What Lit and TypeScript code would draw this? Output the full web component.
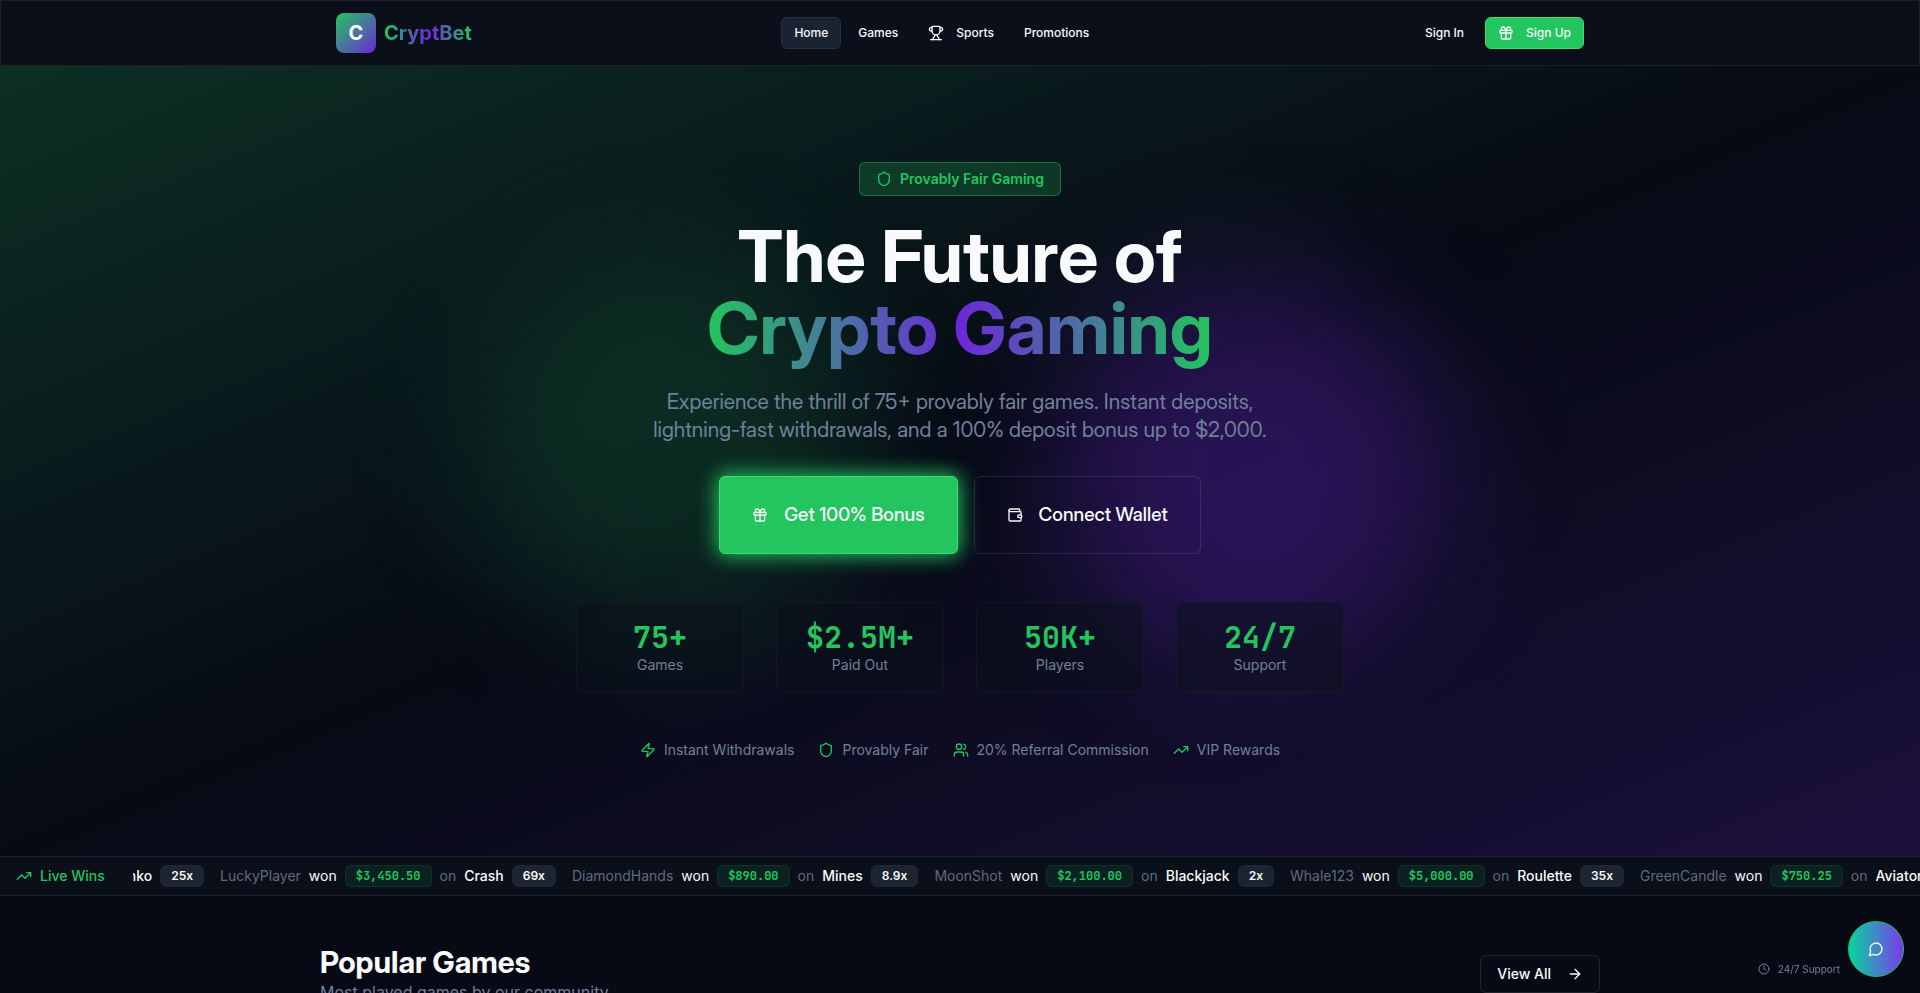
import { LitElement, html, css, svg } from "lit";
import { customElement, property } from "lit/decorators.js";

const icons = {
  trophy: svg`<path d="M10 14.66v1.626a2 2 0 0 1-.976 1.696A5 5 0 0 0 7 21.978"/><path d="M14 14.66v1.626a2 2 0 0 0 .976 1.696A5 5 0 0 1 17 21.978"/><path d="M18 9h1.5a1 1 0 0 0 0-5H18"/><path d="M4 22h16"/><path d="M6 9a6 6 0 0 0 12 0V3a1 1 0 0 0-1-1H7a1 1 0 0 0-1 1z"/><path d="M6 9H4.500a1 1 0 0 1 0-5H6"/>`,
  gift: svg`<rect x="3" y="8" width="18" height="4" rx="1"/><path d="M12 8v13"/><path d="M19 12v7a2 2 0 0 1-2 2H7a2 2 0 0 1-2-2v-7"/><path d="M7.5 8a2.500 2.500 0 0 1 0-5A4.800 8 0 0 1 12 8a4.800 8 0 0 1 4.500-5 2.500 2.500 0 0 1 0 5"/>`,
  shield: svg`<path d="M20 13c0 5-3.500 7.500-7.660 8.950a1 1 0 0 1-.67-.01C7.500 20.500 4 18 4 13V6a1 1 0 0 1 1-1c2 0 4.500-1.200 6.240-2.720a1.170 1.170 0 0 1 1.520 0C14.510 3.810 17 5 19 5a1 1 0 0 1 1 1z"/>`,
  wallet: svg`<path d="M19 7V4a1 1 0 0 0-1-1H5a2 2 0 0 0 0 4h15a1 1 0 0 1 1 1v4h-3a2 2 0 0 0 0 4h3a1 1 0 0 0 1-1v-2a1 1 0 0 0-1-1"/><path d="M3 5v14a2 2 0 0 0 2 2h15a1 1 0 0 0 1-1v-4"/>`,
  zap: svg`<path d="M4 14a1 1 0 0 1-.78-1.630l9.900-10.200a.5.5 0 0 1 .86.460l-1.920 6.020A1 1 0 0 0 13 10h7a1 1 0 0 1 .78 1.630l-9.900 10.200a.5.5 0 0 1-.86-.460l1.920-6.020A1 1 0 0 0 11 14z"/>`,
  users: svg`<path d="M16 21v-2a4 4 0 0 0-4-4H6a4 4 0 0 0-4 4v2"/><circle cx="9" cy="7" r="4"/><path d="M22 21v-2a4 4 0 0 0-3-3.870"/><path d="M16 3.130a4 4 0 0 1 0 7.750"/>`,
  trending: svg`<path d="M22 7 13.500 15.500 8.500 10.500 2 17"/><path d="M16 7h6v6"/>`,
  arrow: svg`<path d="M5 12h14"/><path d="m12 5 7 7-7 7"/>`,
  clock: svg`<circle cx="12" cy="12" r="10"/><path d="M12 6v6l4 2"/>`,
  message: svg`<path d="M7.900 20A9 9 0 1 0 4 16.100L2 22Z"/>`,
};

@customElement("line-icon")
class LineIcon extends LitElement {
  @property() name: keyof typeof icons = "gift";
  static styles = css`
    :host { display: block; flex: none; width: 16px; height: 16px; }
    svg { display: block; width: 100%; height: 100%; fill: none; stroke: currentColor; stroke-width: 2; stroke-linecap: round; stroke-linejoin: round; }
  `;
  render() {
    return html`<svg viewBox="0 0 24 24" aria-hidden="true">${icons[this.name]}</svg>`;
  }
}

const stats = [
  ["75+", "Games"],
  ["$2.5M+", "Paid Out"],
  ["50K+", "Players"],
  ["24/7", "Support"],
];

const features = [
  ["zap", "Instant Withdrawals"],
  ["shield", "Provably Fair"],
  ["users", "20% Referral Commission"],
  ["trending", "VIP Rewards"],
];

const wins = [
  { player: "LuckyPlayer", amount: "$3,450.50", game: "Crash", multiplier: "69x" },
  { player: "DiamondHands", amount: "$890.00", game: "Mines", multiplier: "8.9x" },
  { player: "MoonShot", amount: "$2,100.00", game: "Blackjack", multiplier: "2x" },
  { player: "Whale123", amount: "$5,000.00", game: "Roulette", multiplier: "35x" },
  { player: "GreenCandle", amount: "$750.25", game: "Aviator", multiplier: "" },
];

@customElement("app-root")
class AppRoot extends LitElement {
  static styles = css`
    :host {
      --bg: #070a15;
      --surface: #0a0f1a;
      --line: #1a212c;
      --chip: #1c2431;
      --fg: #f8fafc;
      --muted: #71809a;
      --green: #22c55e;
      --violet: #6d28d9;
      --mono: "JetBrains Mono", "DejaVu Sans Mono", monospace;
      --display: "Inter Display", Inter, sans-serif;
      display: block;
      min-height: 100vh;
      overflow-x: clip;
      background: var(--bg);
      color: var(--fg);
      font: 400 14px/20px Inter, sans-serif;
    }
    *, *::before, *::after { box-sizing: border-box; }
    h1, h2, p, ul, dl, dd { margin: 0; padding: 0; }
    ul { list-style: none; }
    a { color: inherit; text-decoration: none; }
    button { font: inherit; color: inherit; background: none; cursor: pointer; }

    .header { background: var(--surface); border: 1px solid var(--line); }
    .header-inner {
      display: flex; align-items: center; justify-content: space-between;
      max-width: 1280px; margin: 0 auto; padding: 12px 16px;
    }
    .brand { display: flex; align-items: center; gap: 8px; font-size: 20px; line-height: 28px; font-weight: 700; }
    .brand-mark {
      display: grid; place-items: center; width: 40px; height: 40px; border-radius: 8px;
      background: linear-gradient(135deg, var(--green), var(--violet));
    }
    .gradient-text {
      background: linear-gradient(90deg, var(--green), var(--violet) 50%, var(--green));
      -webkit-background-clip: text; background-clip: text; color: transparent;
    }
    .nav { display: flex; gap: 4px; }
    .account { display: flex; gap: 8px; }
    .btn {
      display: inline-flex; align-items: center; justify-content: center; gap: 12px;
      border: 1px solid transparent; border-radius: 6px; padding: 7px 12px;
      font-size: 12px; line-height: 16px; font-weight: 500; white-space: nowrap;
    }
    .btn-current { background: #1a2332; border-color: #273141; }
    .btn-primary { background: var(--green); border-color: #43d878; }
    .btn-outline { border-color: rgba(255, 255, 255, 0.1); }
    .btn-medium { gap: 16px; padding: 8px 16px; font-size: 14px; line-height: 20px; }
    .btn-large { gap: 16px; padding: 24px 32px; font-family: var(--display); font-size: 19px; line-height: 28px; }
    .glow { box-shadow: 0 0 20px 2px var(--green); }

    .hero {
      position: relative; isolation: isolate; overflow: hidden;
      display: flex; flex-direction: column; align-items: center;
      padding: 96px 16px; text-align: center;
      background: linear-gradient(to bottom right, rgba(34, 197, 94, 0.2), transparent 50%, rgba(109, 40, 217, 0.2));
    }
    .orb { position: absolute; z-index: -1; width: 384px; height: 384px; border-radius: 50%; filter: blur(64px); }
    .orb-green { top: 25%; left: 25%; background: rgba(34, 197, 94, 0.15); }
    .orb-violet { bottom: 25%; right: 25%; background: rgba(109, 40, 217, 0.3); }
    .badge {
      display: flex; align-items: center; gap: 8px; padding: 6px 16px;
      border: 1px solid rgba(34, 197, 94, 0.4); border-radius: 6px;
      background: rgba(34, 197, 94, 0.2); color: var(--green); font-weight: 600;
    }
    .title { margin-top: 24px; font-family: var(--display); font-size: 72px; line-height: 72px; font-weight: 700; }
    .lead { max-width: 672px; margin-top: 24px; font-family: var(--display); font-size: 21px; line-height: 28px; color: var(--muted); }
    .actions { display: flex; flex-wrap: wrap; justify-content: center; gap: 16px; margin-top: 32px; }
    .stats {
      display: grid; grid-template-columns: repeat(4, 1fr); gap: 32px;
      width: 100%; max-width: 768px; margin-top: 48px;
    }
    .stat {
      display: flex; flex-direction: column-reverse; padding: 16px;
      border: 1px solid rgba(26, 33, 44, 0.5); border-radius: 8px; background: rgba(10, 15, 26, 0.5);
    }
    .stat-label { color: var(--muted); }
    .stat-value { font: 700 30px/36px var(--mono); color: var(--green); }
    .features { display: flex; flex-wrap: wrap; justify-content: center; gap: 24px; margin-top: 48px; color: var(--muted); }
    .feature { display: flex; align-items: center; gap: 8px; }
    .feature line-icon { color: var(--green); }

    .ticker {
      display: flex; align-items: center; gap: 28px; padding: 8px 0 8px 16px; overflow: hidden;
      background: var(--surface); border: 1px solid var(--line); border-width: 1px 0; white-space: nowrap;
    }
    .ticker-label { display: flex; align-items: center; gap: 8px; color: var(--green); font-weight: 500; }
    .ticker-view { flex: 1; min-width: 0; overflow: hidden; }
    .ticker-track { display: flex; gap: 16px; width: max-content; margin-left: -21px; }
    .win { display: flex; align-items: center; gap: 8px; }
    .dim { color: #5f6b7d; }
    .game { font-weight: 500; }
    .chip {
      padding: 2px 10px; border: 1px solid #1f2836; border-radius: 6px;
      background: var(--chip); font-size: 12px; line-height: 16px; font-weight: 600;
    }
    .chip-amount {
      border-color: rgba(34, 197, 94, 0.12); background: rgba(34, 197, 94, 0.1);
      color: var(--green); font-family: var(--mono);
    }

    .section-head {
      display: flex; align-items: center; justify-content: space-between;
      max-width: 1280px; margin: 0 auto; padding: 48px 0 32px;
    }
    .section-title { font-family: var(--display); font-size: 30px; line-height: 36px; font-weight: 700; }
    .section-sub { font-size: 16px; line-height: 24px; color: var(--muted); }

    .support { position: fixed; right: 16px; bottom: 16px; display: flex; align-items: flex-end; gap: 8px; }
    .support-note { display: flex; align-items: center; gap: 8px; font-size: 10px; line-height: 16px; color: var(--muted); }
    .support-note line-icon { width: 12px; height: 12px; }
    .chat {
      display: grid; place-items: center; width: 56px; height: 56px; padding: 0;
      border: 1px solid var(--green); border-radius: 50%;
      background: linear-gradient(90deg, #06d6a0, #7c3aed);
    }
  `;

  render() {
    return html`
      <header class="header">
        <div class="header-inner">
          <a class="brand" href="#">
            <span class="brand-mark">C</span><span class="gradient-text">CryptBet</span>
          </a>
          <nav class="nav" aria-label="Main">
            <a class="btn btn-current" href="#" aria-current="page">Home</a>
            <a class="btn" href="#games">Games</a>
            <a class="btn" href="#sports"><line-icon name="trophy"></line-icon>Sports</a>
            <a class="btn" href="#promotions">Promotions</a>
          </nav>
          <div class="account">
            <button class="btn" type="button">Sign In</button>
            <button class="btn btn-primary" type="button"><line-icon name="gift"></line-icon>Sign Up</button>
          </div>
        </div>
      </header>
      <main>
        <section class="hero">
          <div class="orb orb-green"></div>
          <div class="orb orb-violet"></div>
          <div class="badge"><line-icon name="shield"></line-icon>Provably Fair Gaming</div>
          <h1 class="title">The Future of<br /><span class="gradient-text">Crypto Gaming</span></h1>
          <p class="lead">
            Experience the thrill of 75+ provably fair games. Instant deposits, lightning-fast withdrawals, and a 100%
            deposit bonus up to $2,000.
          </p>
          <div class="actions">
            <button class="btn btn-large btn-primary glow" type="button"><line-icon name="gift"></line-icon>Get 100% Bonus</button>
            <button class="btn btn-large btn-outline" type="button"><line-icon name="wallet"></line-icon>Connect Wallet</button>
          </div>
          <dl class="stats">
            ${stats.map(([value, label]) => html`
              <div class="stat"><dt class="stat-label">${label}</dt><dd class="stat-value">${value}</dd></div>`)}
          </dl>
          <ul class="features">
            ${features.map(([icon, label]) => html`
              <li class="feature"><line-icon name=${icon}></line-icon>${label}</li>`)}
          </ul>
        </section>
        <section class="ticker" aria-label="Live wins">
          <div class="ticker-label"><line-icon name="trending"></line-icon>Live Wins</div>
          <div class="ticker-view">
            <div class="ticker-track">
              <div class="win"><span class="game">Plinko</span><span class="chip">25x</span></div>
              ${wins.map((w) => html`
                <div class="win">
                  <span class="dim">${w.player}</span><span>won</span>
                  <span class="chip chip-amount">${w.amount}</span>
                  <span class="dim">on</span><span class="game">${w.game}</span>
                  ${w.multiplier ? html`<span class="chip">${w.multiplier}</span>` : ""}
                </div>`)}
            </div>
          </div>
        </section>
        <section id="games" class="section-head">
          <div>
            <h2 class="section-title">Popular Games</h2>
            <p class="section-sub">Most played games by our community</p>
          </div>
          <a class="btn btn-medium btn-outline" href="#games">View All<line-icon name="arrow"></line-icon></a>
        </section>
      </main>
      <aside class="support">
        <span class="support-note"><line-icon name="clock"></line-icon>24/7 Support</span>
        <button class="chat" type="button" aria-label="Open support chat"><line-icon name="message"></line-icon></button>
      </aside>
    `;
  }
}
